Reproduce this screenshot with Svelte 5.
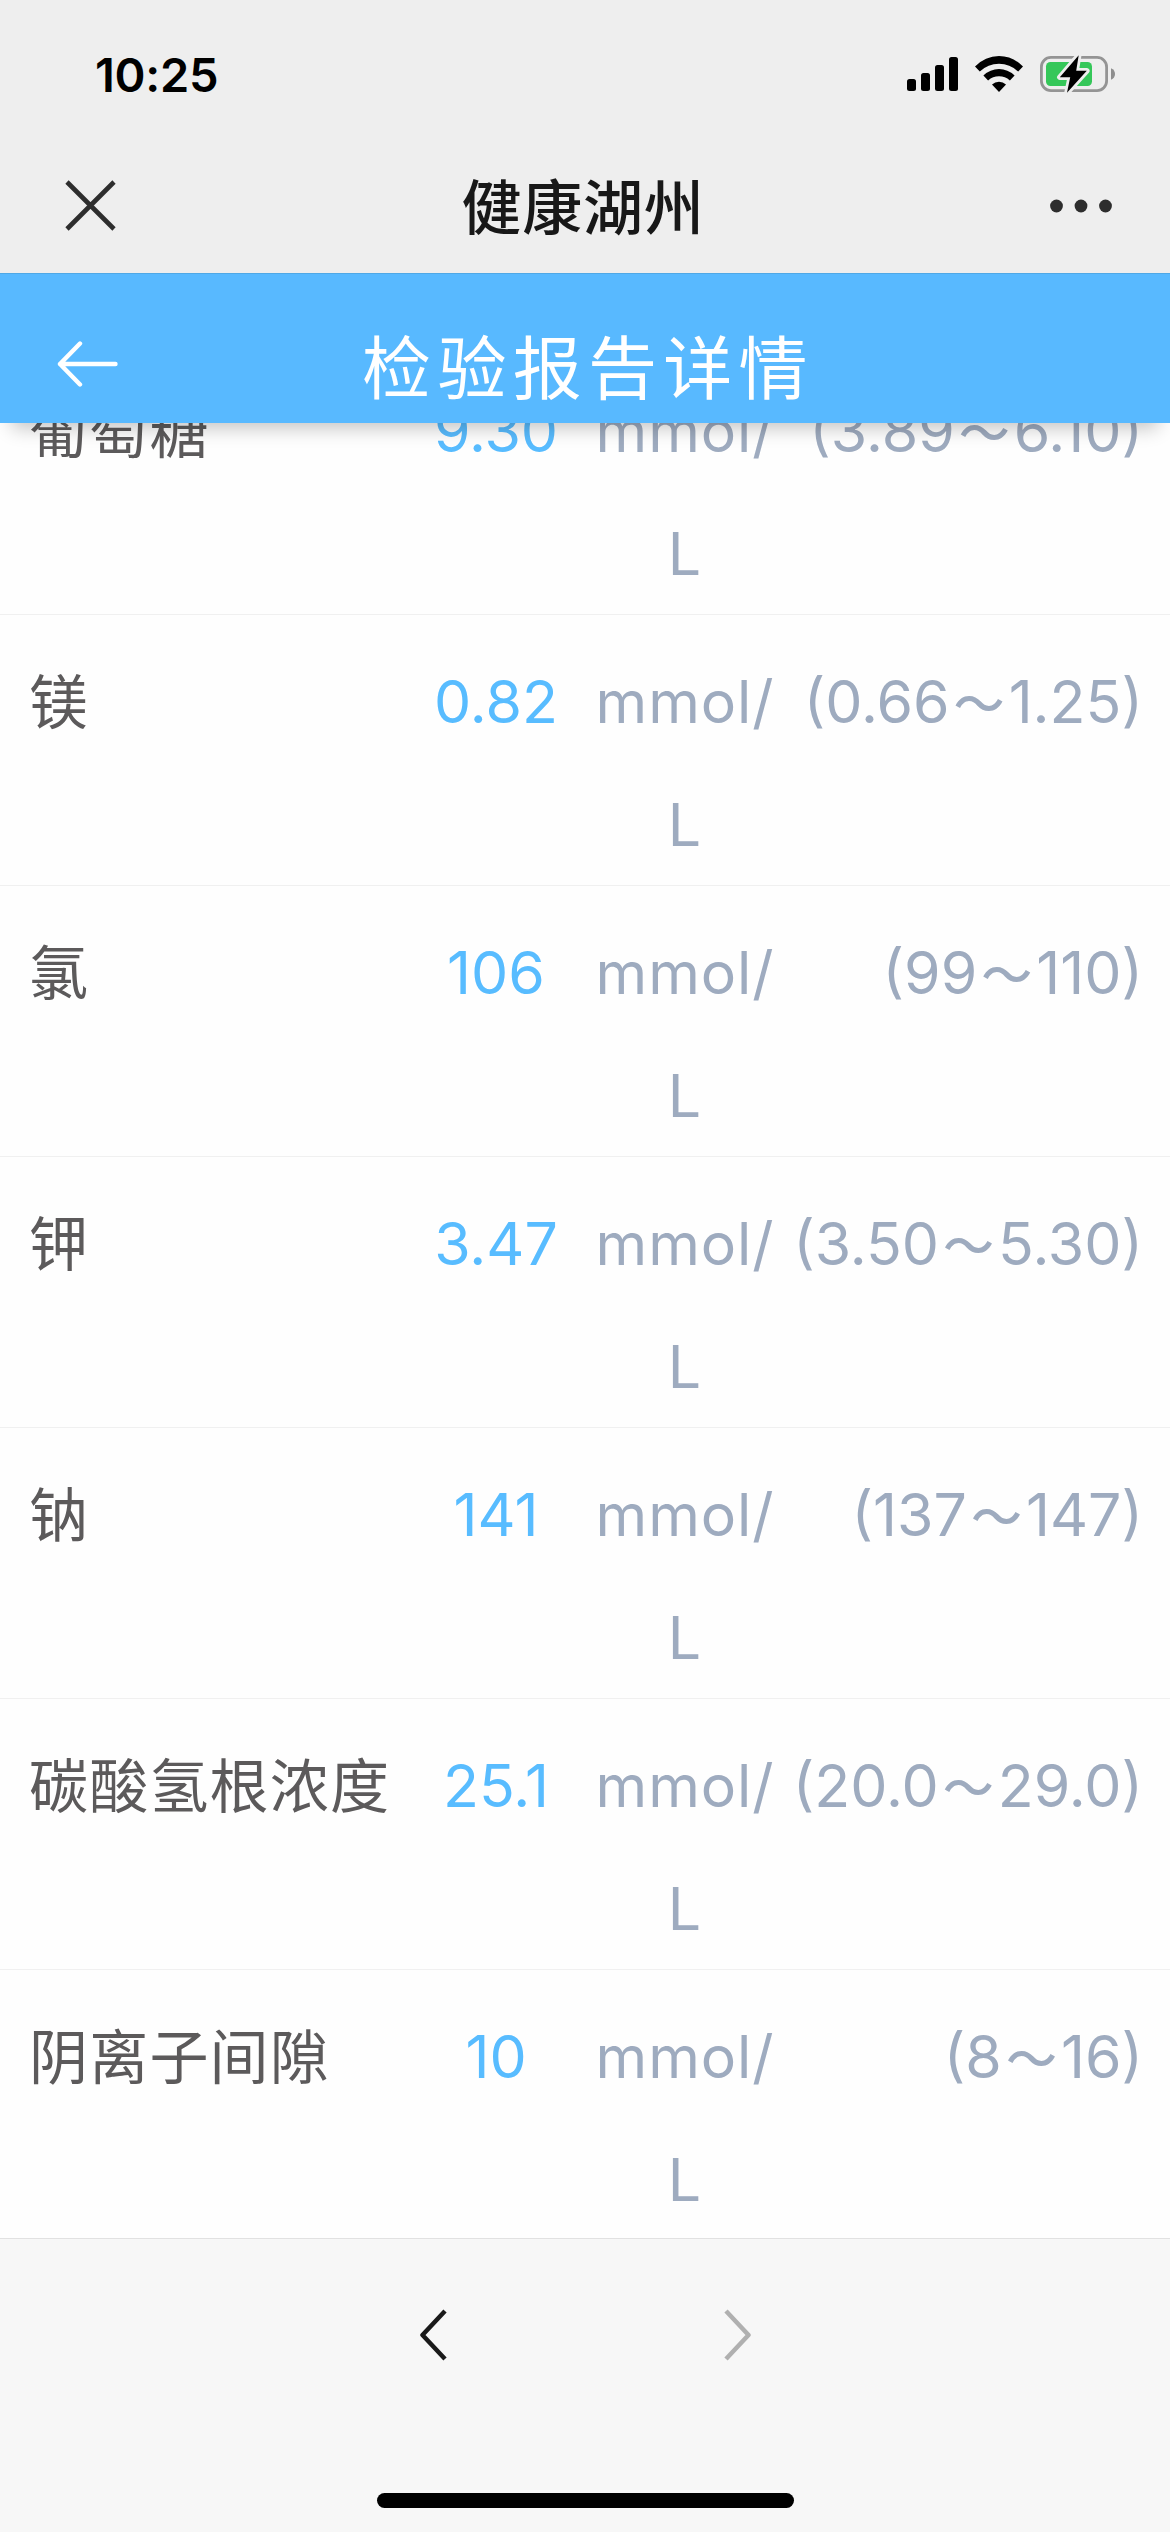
<!--Lab report detail page, opened inside the in-app browser-->
<script>
	let time = '10:25';
	let appName = '健康湖州';
	let pageTitle = '检验报告详情';

	//unit is split because the column is too narrow to keep it on one line
	let results = [
		{ name: '葡萄糖', value: '9.30', unit: ['mmol/', 'L'], low: '3.89', high: '6.10' },
		{ name: '镁', value: '0.82', unit: ['mmol/', 'L'], low: '0.66', high: '1.25' },
		{ name: '氯', value: '106', unit: ['mmol/', 'L'], low: '99', high: '110' },
		{ name: '钾', value: '3.47', unit: ['mmol/', 'L'], low: '3.50', high: '5.30' },
		{ name: '钠', value: '141', unit: ['mmol/', 'L'], low: '137', high: '147' },
		{ name: '碳酸氢根浓度', value: '25.1', unit: ['mmol/', 'L'], low: '20.0', high: '29.0' },
		{ name: '阴离子间隙', value: '10', unit: ['mmol/', 'L'], low: '8', high: '16' }
	];
</script>

<main>
	<div class="status">
		<span class="time">{time}</span>
		<div class="indicators">
			<svg width="51" height="34" viewBox="0 0 51 34">
				<rect x="0" y="22" width="9" height="12" rx="2.5" />
				<rect x="14" y="16" width="9" height="18" rx="2.5" />
				<rect x="28" y="8" width="9" height="26" rx="2.5" />
				<rect x="42" y="0" width="9" height="34" rx="2.5" />
			</svg>
			<svg width="48" height="36" viewBox="0 0 48 36">
				<path d="M0 10.6 Q10.2 0 24 0 Q37.8 0 48 10.6 L43.2 15.6 Q35 7.8 24 7.8 Q13 7.8 4.800 15.6Z" />
				<path d="M8.400 19.600 Q15.200 13.100 24 13.100 Q32.800 13.100 39.600 19.600 L34.900 24.400 Q30.200 20.300 24 20.300 Q17.800 20.300 13.100 24.400Z" />
				<path d="M17 28.500 Q20 25.700 24 25.700 Q28 25.700 31 28.500 L24 36Z" />
			</svg>
			<svg width="76" height="40" viewBox="0 0 76 40">
				<rect x="1.400" y="3.400" width="65.200" height="33.200" rx="9.500" fill="none" stroke="#949494" stroke-width="2.800" />
				<path d="M71 14.200 Q75 16 75 20 Q75 24 71 25.800Z" fill="#8e8e8e" />
				<rect x="6" y="8" width="46" height="24" rx="4.500" fill="#35c759" />
				<path d="M38.700 1.200 L19.800 23.200 H30.200 L27 38.800 L46.800 16.800 H36.200Z" fill="#000" stroke="#eee" stroke-width="5.500" paint-order="stroke" stroke-linejoin="round" />
			</svg>
		</div>
	</div>

	<div class="appbar">
		<svg width="51" height="51" viewBox="0 0 51 51">
			<path d="M2 2 L49 49 M49 2 L2 49" stroke="#2d2d2d" stroke-width="4.600" />
		</svg>
		<h1>{appName}</h1>
		<svg width="62" height="14" viewBox="0 0 62 14" fill="#2d2d2d">
			<circle cx="6.500" cy="7" r="6.400" />
			<circle cx="31" cy="7" r="6.400" />
			<circle cx="55.500" cy="7" r="6.400" />
		</svg>
	</div>

	<header>
		<svg width="62" height="48" viewBox="0 0 62 48">
			<path d="M23 3.500 L3 24 L23 44.500 M3 24 H58.500" fill="none" stroke="#fff" stroke-width="4.400" stroke-linecap="round" stroke-linejoin="round" />
		</svg>
		<h2>{pageTitle}</h2>
	</header>

	<section>
		<ul>
			{#each results as item}
				<li>
					<span class="name">{item.name}</span>
					<span class="value">{item.value}</span>
					<span class="unit">{item.unit[0]}<br>{item.unit[1]}</span>
					<span class="range">({item.low}<span class="tilde">～</span>{item.high})</span>
				</li>
			{/each}
		</ul>
	</section>

	<footer>
		<nav>
			<svg width="28" height="52" viewBox="0 0 28 52">
				<path d="M25 2 L2.500 26 L25 50" fill="none" stroke="#1a1a1a" stroke-width="4.500" stroke-linejoin="round" />
			</svg>
			<svg width="28" height="52" viewBox="0 0 28 52">
				<path d="M3 2 L25.500 26 L3 50" fill="none" stroke="#b0b0b0" stroke-width="4.500" stroke-linejoin="round" />
			</svg>
		</nav>
		<div class="home"></div>
	</footer>
</main>

<style>
	:global(body) {
		margin: 0;
		background: #fefefe;
	}

	main {
		display: flex;
		flex-direction: column;
		width: 1170px;
		height: 2532px;
		overflow: hidden;
		background: #fefefe;
		font-family: Inter, "Noto Sans CJK SC", sans-serif;
	}

	svg {
		display: block;
	}

	.status {
		display: flex;
		justify-content: space-between;
		align-items: center;
		height: 148px;
		padding: 0 54px 0 95px;
		background: #eeeeee;
	}

	.time {
		font-size: 47px;
		font-weight: 600;
		letter-spacing: -0.3px;
	}

	.indicators {
		display: flex;
		align-items: center;
		gap: 17px;
	}

	.appbar {
		display: flex;
		justify-content: space-between;
		align-items: center;
		height: 125px;
		box-sizing: border-box;
		padding: 0 58px 10px 65px;
		background: #eeeeee;
	}

	h1 {
		margin: 0;
		padding-bottom: 4px;
		font-family: "Noto Sans CJK SC", sans-serif;
		font-size: 60px;
		font-weight: 500;
		line-height: 80px;
		letter-spacing: 0.8px;
		color: #181818;
	}

	header {
		position: relative;
		z-index: 1;
		display: grid;
		grid-template-columns: 120px 1fr 120px;
		align-items: center;
		height: 150px;
		box-sizing: border-box;
		padding-top: 30px;
		border-top: 1px solid #4fa8e6;
		background: #58b9ff;
		box-shadow: 0 17px 18px -12px rgba(0, 0, 0, 0.24);
	}

	header svg {
		margin-left: 57px;
	}

	h2 {
		margin: 0;
		padding-left: 6px;
		font-family: "Noto Sans CJK SC", sans-serif;
		font-size: 69px;
		font-weight: 400;
		line-height: 80px;
		letter-spacing: 6.300px;
		text-align: center;
		color: #fff;
	}

	section {
		flex: 1;
		min-height: 0;
		overflow: hidden;
	}

	/*list is scrolled a little, so the first row sits half under the header*/
	ul {
		list-style: none;
		margin: -79px 0 0;
		padding: 0;
	}

	li {
		display: grid;
		grid-template-columns: 383px 168px 210px 1fr;
		height: 271px;
		box-sizing: border-box;
		padding: 25px 27px 0 29px;
		border-bottom: 1px solid #f0f0f0;
		font-size: 59px;
		font-weight: 400;
		line-height: 123px;
		white-space: nowrap;
		color: #9eabbf;
	}

	.name {
		margin-top: -3px;
		font-family: "Noto Sans CJK SC", sans-serif;
		letter-spacing: 1.2px;
		color: #5c5a5b;
	}

	.value {
		text-align: center;
		color: #58bcff;
	}

	.unit {
		text-align: center;
		letter-spacing: 0.9px;
	}

	.range {
		text-align: right;
	}

	.tilde {
		margin: 0 4px;
		font-size: 51px;
		font-weight: 500;
	}

	footer {
		display: flex;
		flex-direction: column;
		justify-content: space-between;
		align-items: center;
		height: 294px;
		box-sizing: border-box;
		padding: 70px 0 24px;
		border-top: 1px solid #e1e1e1;
		background: #f7f7f7;
	}

	nav {
		display: flex;
		gap: 275px;
	}

	.home {
		width: 417px;
		height: 15px;
		border-radius: 8px;
		background: #000;
	}
</style>
